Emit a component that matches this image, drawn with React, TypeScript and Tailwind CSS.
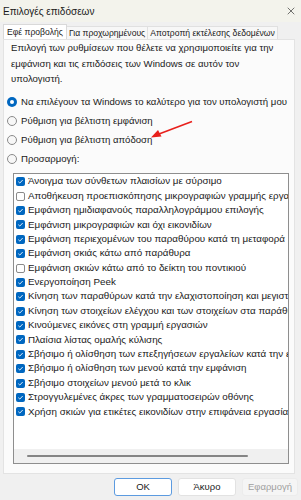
import { X } from "lucide-react";

const options = [
  "Να επιλέγουν τα Windows το καλύτερο για τον υπολογιστή μου",
  "Ρύθμιση για βέλτιστη εμφάνιση",
  "Ρύθμιση για βέλτιστη απόδοση",
  "Προσαρμογή:",
];

const effects: { label: string; checked: boolean }[] = [
  { label: "Άνοιγμα των σύνθετων πλαισίων με σύρσιμο", checked: true },
  { label: "Αποθήκευση προεπισκόπησης μικρογραφιών γραμμής εργασιών", checked: false },
  { label: "Εμφάνιση ημιδιαφανούς παραλληλογράμμου επιλογής", checked: true },
  { label: "Εμφάνιση μικρογραφιών και όχι εικονιδίων", checked: true },
  { label: "Εμφάνιση περιεχομένων του παραθύρου κατά τη μεταφορά", checked: true },
  { label: "Εμφάνιση σκιάς κάτω από παράθυρα", checked: true },
  { label: "Εμφάνιση σκιών κάτω από το δείκτη του ποντικιού", checked: false },
  { label: "Ενεργοποίηση Peek", checked: true },
  { label: "Κίνηση των παραθύρων κατά την ελαχιστοποίηση και μεγιστοποίηση", checked: true },
  { label: "Κίνηση των στοιχείων ελέγχου και των στοιχείων στα παράθυρα", checked: true },
  { label: "Κινούμενες εικόνες στη γραμμή εργασιών", checked: true },
  { label: "Πλαίσια λίστας ομαλής κύλισης", checked: true },
  { label: "Σβήσιμο ή ολίσθηση των επεξηγήσεων εργαλείων κατά την εμφάνιση", checked: true },
  { label: "Σβήσιμο ή ολίσθηση των μενού κατά την εμφάνιση", checked: true },
  { label: "Σβήσιμο στοιχείων μενού μετά το κλικ", checked: true },
  { label: "Στρογγυλεμένες άκρες των γραμματοσειρών οθόνης", checked: true },
  { label: "Χρήση σκιών για ετικέτες εικονιδίων στην επιφάνεια εργασίας", checked: true },
];

const Radio = ({ selected }: { selected: boolean }) =>
  selected ? (
    <span className="w-[10px] h-[10px] rounded-full bg-[#0067c0] flex items-center justify-center shrink-0">
      <span className="w-[4px] h-[4px] rounded-full bg-white" />
    </span>
  ) : (
    <span className="w-[10px] h-[10px] rounded-full border border-[#8a8a8a] bg-[#f7f7f7] shrink-0" />
  );

const Check = ({ checked }: { checked: boolean }) =>
  checked ? (
    <span className="w-[9px] h-[9px] rounded-[2px] bg-[#0067c0] flex items-center justify-center shrink-0">
      <svg width="7" height="7" viewBox="0 0 8 8">
        <path d="M1.5 4.2 L3.2 5.8 L6.5 2.3" stroke="white" strokeWidth="1" fill="none" />
      </svg>
    </span>
  ) : (
    <span className="w-[9px] h-[9px] rounded-[2px] border border-[#8a8a8a] bg-white shrink-0" />
  );

export default function App() {
  return (
    <div
      className="w-[301px] h-[500px] bg-[#f0f0f0] flex flex-col text-[#1a1a1a] overflow-hidden"
      style={{ fontFamily: '"Liberation Sans", Arial, sans-serif' }}
    >
      <div className="h-[22px] bg-[#f3f3ec] flex items-center justify-between pl-[3px] pr-[4px]">
        <span className="text-[10px]">Επιλογές επιδόσεων</span>
        <X size={12} strokeWidth={1.2} />
      </div>

      <div className="flex items-end px-[3px] pt-[2px] text-[8.6px] whitespace-nowrap">
        <div className="bg-white border border-b-0 border-[#d9d9d9] px-[3px] h-[15px] flex items-center">
          Εφέ προβολής
        </div>
        <div className="bg-[#f7f7f7] border border-b-0 border-l-0 border-[#e0e0e0] px-[2px] h-[13px] flex items-center">
          Για προχωρημένους
        </div>
        <div className="bg-[#f7f7f7] border border-b-0 border-l-0 border-[#e0e0e0] px-[2px] h-[13px] flex items-center">
          Αποτροπή εκτέλεσης δεδομένων
        </div>
      </div>

      <div className="ml-[3px] mr-[6px] h-[435px] bg-[#fbfbfb] border border-[#e3e3e3] flex flex-col text-[9.6px]">
        <p className="px-[7px] leading-[15.5px] whitespace-nowrap">
          Επιλογή των ρυθμίσεων που θέλετε να χρησιμοποιείτε για την
          <br />
          εμφάνιση και τις επιδόσεις των Windows σε αυτόν τον
          <br />
          υπολογιστή.
        </p>

        <div className="relative flex flex-col pl-[3px] mt-[6px]">
          {options.map((o, i) => (
            <div key={o} className="h-[19px] flex items-center gap-[4px] whitespace-nowrap">
              <Radio selected={i === 0} />
              <span>{o}</span>
            </div>
          ))}
          <svg className="absolute left-[141px] top-[25px]" width="50" height="22" viewBox="0 0 50 22">
            <line x1="47" y1="3.5" x2="14" y2="16" stroke="#e8201c" strokeWidth="1.6" />
            <path d="M6 19.5 L13 12 L16.5 18.5 Z" fill="#e8201c" />
          </svg>
        </div>

        <div className="ml-[9px] mr-[5px] mt-[4px] h-[291px] border border-[#8e8e8e] bg-white flex flex-col">
          <div className="flex-1 overflow-hidden pt-[1px] pl-[2px]">
            {effects.map((e) => (
              <div key={e.label} className="h-[14.4px] flex items-center gap-[3px] whitespace-nowrap">
                <Check checked={e.checked} />
                <span className="text-[9.8px]">{e.label}</span>
              </div>
            ))}
          </div>
          <div className="h-[14px] bg-[#f0f0f0] flex items-center px-[13px]">
            <div className="w-[221px] h-[2px] bg-[#858585] rounded-full" />
          </div>
        </div>
      </div>

      <div className="flex justify-end gap-[6px] pr-[3px] pt-[4px] text-[9.5px]">
        <button className="w-[58px] h-[18px] bg-white border border-[#5c9be0] rounded-[3px]">OK</button>
        <button className="w-[58px] h-[18px] bg-white border border-[#e2e2e2] rounded-[3px]">Άκυρο</button>
        <button className="w-[56px] h-[18px] bg-[#f5f5f5] border border-[#ececec] rounded-[3px] text-[#a0a0a0]">
          Εφαρμογή
        </button>
      </div>
    </div>
  );
}
